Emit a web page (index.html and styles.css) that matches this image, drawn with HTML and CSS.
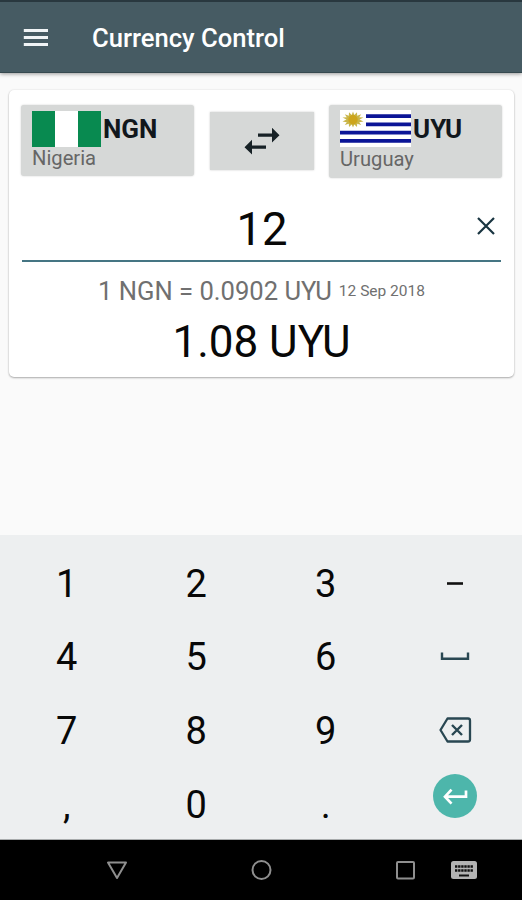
FILE: index.html
```html
<!DOCTYPE html>
<html lang="en">
<head>
<meta charset="utf-8">
<title>Currency Control</title>
<link rel="stylesheet" href="styles.css">
</head>
<body>
<div class="screen">
  <header class="app-bar">
    <svg class="menu" width="26" height="20" viewBox="0 0 26 20"><path d="M.8 2.500h24.200M.8 9.500h24.200M.8 16.500h24.200" stroke="#f0f4f6" stroke-width="3"/></svg>
    <h1 class="title">Currency Control</h1>
  </header>
  <main class="content">
    <section class="card">
      <div class="pair">
        <button class="currency from">
          <span class="top">
            <svg class="flag" width="69" height="36" viewBox="0 0 69 36"><path fill="#fff" d="M0 0h69v36H0z"/><path fill="#088a50" d="M0 0h23v36H0zM46 0h23v36H46z"/></svg>
            <b class="code">NGN</b>
          </span>
          <span class="country">Nigeria</span>
        </button>
        <button class="swap" aria-label="Swap">
          <svg width="36" height="28" viewBox="0 0 36 28"><path d="M14 8.200h14M8 20.200h14" stroke="#172126" stroke-width="3.200"/><path d="M28 .8 35.500 8.200 28 15.600zM8 12.800 .5 20.200 8 27.600z" fill="#172126"/></svg>
        </button>
        <button class="currency to">
          <span class="top">
            <svg class="flag" width="71" height="37" viewBox="0 0 71 37"><path fill="#fff" d="M0 0h71v37H0z"/><path d="M26 6.200h45M26 14.400h45M0 22.700h71M0 30.900h71" stroke="#0b1597" stroke-width="3.800"/><path d="M13 1.500l1.300 3.500 2.700-2.700.2 3.500 4-1.500-2 3 4.300.2-4 2 4 2-4.300.7 2 2.700-4-1.200-.2 3.300-2.700-2.500-1.300 3-1.300-3-2.700 2.500-.2-3.300-4 1.200 2-2.700-4.300-.7 4-2-4-2 4.300-.2-2-3 4 1.500.2-3.500 2.700 2.700z" fill="#c9b64a"/><circle cx="13" cy="9.700" r="4.700" fill="#cda51c"/></svg>
            <b class="code">UYU</b>
          </span>
          <span class="country">Uruguay</span>
        </button>
      </div>
      <div class="amount">
        <span class="value">12</span>
        <svg class="clear" width="20" height="20" viewBox="0 0 20 20"><path d="M2 2l16 16M18 2 2 18" stroke="#183440" stroke-width="2.200"/></svg>
      </div>
      <div class="rate"><span>1 NGN = 0.0902 UYU</span><span class="date">12 Sep 2018</span></div>
      <div class="result">1.08 UYU</div>
    </section>
  </main>
  <div class="keypad">
    <div class="key">1</div><div class="key">2</div><div class="key">3</div>
    <div class="key"><svg width="16" height="10" viewBox="0 0 16 10"><path d="M0 4.500h16" stroke="#111" stroke-width="2.600"/></svg></div>
    <div class="key">4</div><div class="key">5</div><div class="key">6</div>
    <div class="key"><svg width="30" height="14" viewBox="0 0 30 14"><path d="M2 2.500v6.200h26V2.500" fill="none" stroke="#294752" stroke-width="2.400"/></svg></div>
    <div class="key">7</div><div class="key">8</div><div class="key">9</div>
    <div class="key"><svg width="34" height="30" viewBox="0 0 34 30"><path d="M9.500 2.500H30q2 0 2 2v19q0 2-2 2H9.500L2.500 14z" fill="none" stroke="#294752" stroke-width="2.300" stroke-linejoin="round"/><path d="M14 9l10 10M24 9 14 19" stroke="#294752" stroke-width="2.400"/></svg></div>
    <div class="key">,</div><div class="key">0</div><div class="key">.</div>
    <div class="key enter"><span class="disc"><svg width="26" height="18" viewBox="0 0 26 18"><path d="M24 3.500V9.700H3M9.500 2.700 3 9.700l6.500 7" fill="none" stroke="#fff" stroke-width="2.700"/></svg></span></div>
  </div>
  <footer class="nav">
    <svg width="522" height="59" viewBox="0 0 522 59" fill="none" stroke="#8f8f8f" stroke-width="2">
      <path d="M108 22.500h18l-9 15.500z" stroke-linejoin="round"/>
      <circle cx="261.500" cy="30" r="9"/>
      <rect x="397" y="22" width="17" height="16.500" rx="1"/>
      <rect x="451" y="21" width="26" height="18" rx="2.500" fill="#b3b3b3" stroke="none"/>
      <path d="M455 26.500h18M455 30.500h18" stroke="#111" stroke-width="2.400" stroke-dasharray="2.400 .7"/>
      <path d="M459 35.500h10" stroke="#111" stroke-width="2"/>
    </svg>
  </footer>
</div>
</body>
</html>
```
FILE: styles.css
```css
* { box-sizing: border-box; }
body {
  margin: 0;
  font-family: Roboto, sans-serif;
  background: #fafafa;
}
.screen {
  width: 522px;
  height: 900px;
  display: flex;
  flex-direction: column;
  overflow: hidden;
}
.app-bar {
  flex: none;
  height: 73px;
  display: flex;
  align-items: center;
  padding: 2px 23px 0;
  background: #465b63;
  border-top: 2px solid #29383f;
  border-bottom: 1px solid #36494f;
  box-shadow: 0 1px 4px rgba(0, 0, 0, .4);
}
.title {
  margin: 0 0 0 43px;
  font-size: 25.6px;
  font-weight: 500;
  line-height: 32px;
  color: #fff;
}
.content { flex: 1; padding: 17px 8px 0 9px; }
.card {
  height: 287px;
  padding: 15px 12px 0;
  background: #fff;
  border-radius: 5px;
  box-shadow: 0 1px 2px rgba(0, 0, 0, .3), 0 0 2px rgba(0, 0, 0, .1);
}
.pair { display: flex; justify-content: space-between; align-items: flex-start; }
button {
  border: 0;
  margin: 0;
  font-family: inherit;
  background: #d6d8d7;
  box-shadow: 0 0 2px rgba(0, 0, 0, .2);
}
.currency {
  width: 173px;
  height: 71px;
  padding: 5px 11px 0;
  border-radius: 3px;
  text-align: left;
  display: flex;
  flex-direction: column;
}
.currency.to { height: 73px; }
.top { display: flex; align-items: center; height: 37px; }
.flag { flex: none; }
.code { margin-left: 2px; font-size: 26px; line-height: 30px; color: #11171c; }
.country { font-size: 20.2px; line-height: 23px; color: #666; }
.to .country { margin-top: 1px; }
.swap {
  width: 104px;
  height: 58px;
  margin-top: 7px;
  padding: 0;
  display: grid;
  place-items: center;
}
.amount {
  height: 84px;
  margin: 0 1px;
  display: grid;
  grid-template-columns: 40px 1fr 40px;
  align-items: center;
  border-bottom: 2px solid #457583;
}
.value { grid-column: 2; font-size: 45.5px; line-height: 54px; text-align: center; color: #080808; padding: 22px 0 0 1px; }
.clear { margin: 14px 0 0 15px; }
.rate {
  height: 58px;
  display: flex;
  align-items: center;
  justify-content: center;
  gap: 7px;
  font-size: 25.6px;
  color: #707070;
}
.date { font-size: 15.5px; }
.result { font-size: 44px; line-height: 52px; margin-top: -4px; text-align: center; color: #080808; }
.keypad {
  flex: none;
  height: 305px;
  padding: 12px 2px 0;
  display: grid;
  grid-template-columns: repeat(4, 129.500px);
  grid-auto-rows: 73.600px;
  background: #edeff0;
  border-bottom: 1px solid #a8abac;
}
.key {
  display: flex;
  align-items: center;
  justify-content: center;
  font-size: 38px;
  color: #080808;
}
.enter { padding-bottom: 18px; }
.disc {
  width: 44px;
  height: 44px;
  border-radius: 50%;
  background: #4db6ab;
  display: grid;
  place-items: center;
}
.nav { flex: none; height: 60px; background: #000; }
.nav svg { display: block; }
```
